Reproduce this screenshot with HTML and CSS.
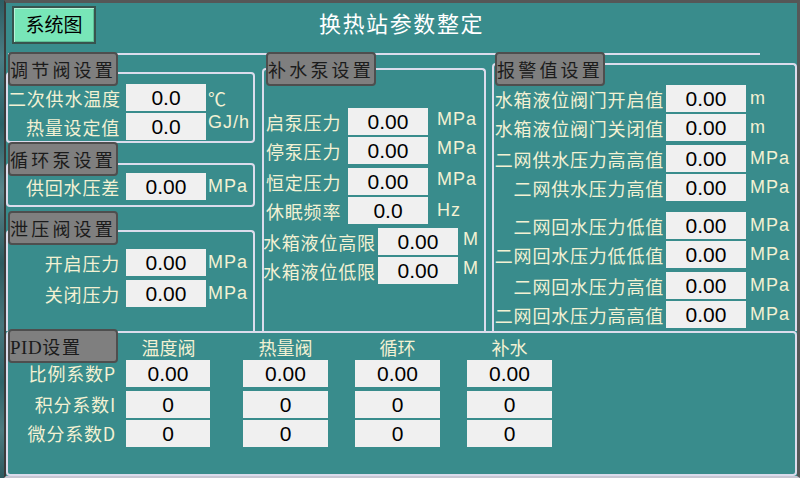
FILE: index.html
```html
<!DOCTYPE html>
<html lang="zh-CN">
<head>
<meta charset="utf-8">
<title>换热站参数整定</title>
<link rel="stylesheet" href="styles.css">
</head>
<body>
<div class="screen">
  <div class="edge"></div>
  <div class="main">
    <header class="topbar">
      <button class="sys-btn">系统图</button>
      <h1 class="title">换热站参数整定</h1>
    </header>
    <div class="rule"></div>
    <div class="panels">
      <div class="col col-left">
        <section class="group g1">
          <div class="head">调节阀设置</div>
          <div class="frame">
            <div class="row"><span class="lbl">二次供水温度</span><span class="val">0.0</span><span class="unit">℃</span></div>
            <div class="row"><span class="lbl">热量设定值</span><span class="val">0.0</span><span class="unit up">GJ/h</span></div>
          </div>
        </section>
        <section class="group g2">
          <div class="head">循环泵设置</div>
          <div class="frame">
            <div class="row"><span class="lbl">供回水压差</span><span class="val">0.00</span><span class="unit">MPa</span></div>
          </div>
        </section>
        <section class="group g3">
          <div class="head">泄压阀设置</div>
          <div class="frame">
            <div class="row"><span class="lbl">开启压力</span><span class="val">0.00</span><span class="unit">MPa</span></div>
            <div class="row gap4"><span class="lbl">关闭压力</span><span class="val">0.00</span><span class="unit">MPa</span></div>
          </div>
        </section>
      </div>
      <div class="col col-mid">
        <section class="group gm">
          <div class="head">补水泵设置</div>
          <div class="frame">
            <div class="row"><span class="lbl">启泵压力</span><span class="val">0.00</span><span class="unit mpa">MPa</span></div>
            <div class="row"><span class="lbl">停泵压力</span><span class="val">0.00</span><span class="unit mpa">MPa</span></div>
            <div class="row gap4"><span class="lbl">恒定压力</span><span class="val">0.00</span><span class="unit mpa">MPa</span></div>
            <div class="row"><span class="lbl">休眠频率</span><span class="val">0.0</span><span class="unit">Hz</span></div>
            <div class="row gap4 wide"><span class="lbl">水箱液位高限</span><span class="val">0.00</span><span class="unit mpa">M</span></div>
            <div class="row wide"><span class="lbl">水箱液位低限</span><span class="val">0.00</span><span class="unit mpa">M</span></div>
          </div>
        </section>
      </div>
      <div class="col col-right">
        <section class="group gr">
          <div class="head">报警值设置</div>
          <div class="frame">
            <div class="row"><span class="lbl">水箱液位阀门开启值</span><span class="val">0.00</span><span class="unit">m</span></div>
            <div class="row"><span class="lbl">水箱液位阀门关闭值</span><span class="val">0.00</span><span class="unit">m</span></div>
            <div class="row gap4"><span class="lbl">二网供水压力高高值</span><span class="val">0.00</span><span class="unit">MPa</span></div>
            <div class="row"><span class="lbl">二网供水压力高值</span><span class="val">0.00</span><span class="unit">MPa</span></div>
            <div class="row gap11"><span class="lbl">二网回水压力低值</span><span class="val">0.00</span><span class="unit">MPa</span></div>
            <div class="row"><span class="lbl">二网回水压力低低值</span><span class="val">0.00</span><span class="unit">MPa</span></div>
            <div class="row gap4"><span class="lbl">二网回水压力高值</span><span class="val">0.00</span><span class="unit">MPa</span></div>
            <div class="row"><span class="lbl">二网回水压力高高值</span><span class="val">0.00</span><span class="unit">MPa</span></div>
          </div>
        </section>
      </div>
    </div>
    <section class="group pid">
      <div class="head"><span class="latin">PID</span>设置</div>
      <div class="frame">
        <div class="pid-grid">
          <span></span>
          <span class="colhead">温度阀</span>
          <span class="colhead">热量阀</span>
          <span class="colhead">循环</span>
          <span class="colhead">补水</span>

          <span class="plbl">比例系数P</span>
          <span class="val">0.00</span>
          <span class="val">0.00</span>
          <span class="val">0.00</span>
          <span class="val">0.00</span>

          <span class="plbl">积分系数I</span>
          <span class="val">0</span>
          <span class="val">0</span>
          <span class="val">0</span>
          <span class="val">0</span>

          <span class="plbl">微分系数D</span>
          <span class="val">0</span>
          <span class="val">0</span>
          <span class="val">0</span>
          <span class="val">0</span>
        </div>
      </div>
    </section>
  </div>
</div>
</body>
</html>
```

FILE: styles.css
```css
* {
  box-sizing: border-box;
  margin: 0;
  padding: 0;
}

body {
  margin: 0;
  width: 800px;
  height: 478px;
  overflow: hidden;
  background: #2f5f63;
  font-family: "Noto Sans CJK SC", "Noto Sans", sans-serif;
}

.screen {
  display: flex;
  width: 800px;
  height: 478px;
}

.edge {
  width: 4px;
  flex: none;
  background: linear-gradient(180deg, #2d5d63 0%, #4b7d84 12%, #2b6268 26%, #5a868c 40%, #2e5b60 55%, #47767c 68%, #30646a 80%, #4d7b80 90%, #2d5a5f 100%);
}

.main {
  flex: 1;
  display: flex;
  flex-direction: column;
  background: #398c8c;
  border-top: 3px solid #555757;
  border-left: 2px solid #3b3b3b;
  border-right: 3px solid #565858;
  border-bottom: 2px solid #c6c6d2;
}

/* ---------- top bar ---------- */
.topbar {
  height: 50px;
  flex: none;
  display: grid;
  grid-template-columns: 1fr auto 1fr;
  align-items: start;
}

.sys-btn {
  grid-column: 1;
  justify-self: start;
  margin: 3px 0 0 6px;
  width: 84px;
  height: 38px;
  padding-bottom: 3px;
  background: #78e6b8;
  border: 2px solid #38534e;
  box-shadow: inset 1px 1px 0 #b6f5d9, inset -1px -1px 0 #5cbf96;
  color: #000;
  font-family: "Noto Sans CJK SC", sans-serif;
  font-size: 19px;
  line-height: 30px;
}

.title {
  grid-column: 2;
  margin-top: 5px;
  font-size: 22px;
  font-weight: normal;
  letter-spacing: 1.6px;
  line-height: 28px;
  color: #ffffff;
}

.rule {
  height: 2px;
  flex: none;
  margin: 0 37px 0 2px;
  background: #dcdcec;
}

/* ---------- panels ---------- */
.panels {
  display: flex;
  height: 279px;
  flex: none;
  margin-top: -3px;
}

.col {
  display: flex;
  flex-direction: column;
}

.col-left { width: 249px; }
.col-mid { width: 224px; margin-left: 7px; }
.col-right { width: 305px; margin-left: 6px; }

.group {
  display: flex;
  flex-direction: column;
}

.head {
  position: relative;
  z-index: 1;
  width: 110px;
  height: 34px;
  flex: none;
  background: #7f7f7f;
  border: 2px solid #4e4e4e;
  border-radius: 4px;
  color: #1b1b1b;
  font-size: 18px;
  letter-spacing: 3.2px;
  line-height: 30px;
  padding-left: 0;
  white-space: nowrap;
}

.head .latin {
  font-family: "Liberation Serif", serif;
  letter-spacing: 0.5px;
  font-size: 19px;
}

.pid .head {
  letter-spacing: 2px;
}

.frame {
  border: 2px solid #dcdcec;
  border-radius: 4px;
}

.row {
  display: flex;
  align-items: center;
  height: 27px;
  flex: none;
}

.row + .row { margin-top: 2px; }
.row.gap4 { margin-top: 4px; }
.row.gap11 { margin-top: 11px; }

.lbl {
  color: #f3f1d3;
  font-size: 18px;
  letter-spacing: 0.8px;
  white-space: nowrap;
}

.val {
  width: 80px;
  height: 27px;
  flex: none;
  background: #f0f0f0;
  color: #000;
  font-family: "Liberation Sans", Arial, sans-serif;
  font-size: 21px;
  line-height: 27px;
  text-align: center;
}

.unit {
  color: #f3f1d3;
  font-family: "Liberation Sans", Arial, sans-serif;
  font-size: 18px;
  letter-spacing: 1px;
  white-space: nowrap;
}

/* left column */
.g1 .head, .g2 .head, .g3 .head { margin-left: 2px; }

.col-left .lbl {
  width: 112px;
  text-align: right;
  margin-right: 6px;
}
.col-left .unit { margin-left: 2px; }
.col-left .unit.up { align-self: flex-start; margin-top: -1px; }

.g1 .frame {
  margin-top: -14px;
  padding: 10px 0 1px 0;
}

.g2 { margin-top: -1px; }
.g2 .frame {
  margin-top: -13px;
  padding: 8px 0 5px 0;
}

.g3 {
  margin-top: 4px;
  flex: 1;
}
.g3 .frame {
  flex: 1;
  margin-top: -15px;
  padding-top: 17px;
  border-bottom: 0;
  border-radius: 4px 4px 0 0;
}

/* middle column */
.gm { flex: 1; }
.gm .head { margin-left: 4px; }
.gm .frame {
  flex: 1;
  margin-top: -18px;
  padding-top: 38px;
  border-bottom: 0;
  border-radius: 4px 4px 0 0;
}
.gm .lbl {
  width: 84px;
  padding-left: 2px;
}
.gm .row.wide .lbl {
  width: 115px;
  padding-left: 0;
  margin-left: -1px;
}
.gm .unit { margin-left: 9px; }
.gm .row.wide .unit { margin-left: 5px; }
.gm .unit.mpa { margin-bottom: 5px; }

/* right column */
.gr { flex: 1; }
.gr .head { margin-left: 3px; }
.gr .frame {
  flex: 1;
  margin-top: -23px;
  padding-top: 20px;
  border-bottom: 0;
  border-radius: 4px 4px 0 0;
}
.gr .lbl {
  width: 170px;
  text-align: right;
  margin-right: 2px;
}
.gr .unit { margin-left: 4px; }

/* ---------- PID ---------- */
.pid {
  flex: 1;
  margin-top: -2px;
}
.pid .head { margin-left: 2px; }
.pid .frame {
  flex: 1;
  margin-top: -32px;
}

.pid-grid {
  display: grid;
  grid-template-columns: 118px 117px 112px 112px 85px;
  grid-template-rows: 27px 27px 31px 29px;
  align-items: end;
}

.pid-grid .val {
  width: 85px;
}
.pid-grid .val:nth-child(5n+2) {
  width: 84px;
}

.colhead {
  width: 85px;
  align-self: center;
  text-align: center;
  color: #f3f1d3;
  font-size: 18px;
  line-height: 27px;
  padding-top: 1px;
}

.plbl {
  align-self: end;
  height: 27px;
  line-height: 27px;
  padding-right: 10px;
  text-align: right;
  color: #f3f1d3;
  font-size: 18px;
  letter-spacing: 0.8px;
  white-space: nowrap;
}
```
